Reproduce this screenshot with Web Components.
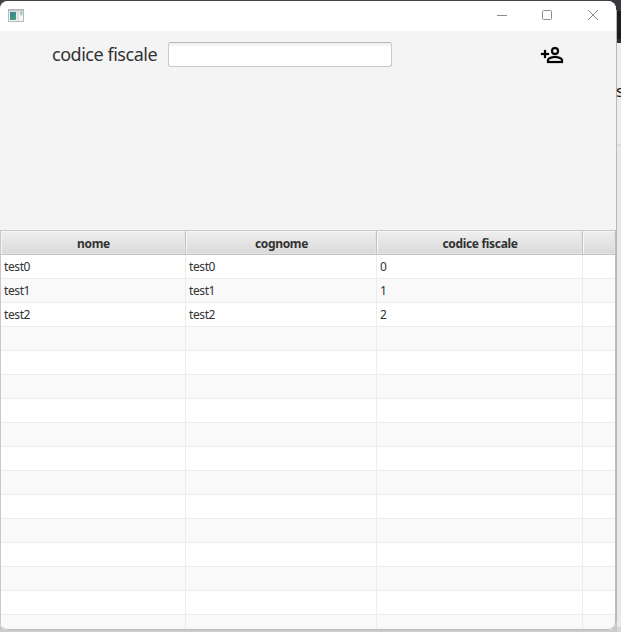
<!DOCTYPE html>
<html lang="it">
<head>
<meta charset="utf-8">
<title>codice fiscale</title>
<style>
html,body{margin:0;width:621px;height:632px;overflow:hidden}
body{font-family:"Noto Sans","Open Sans",sans-serif;color:#323232}
</style>
</head>
<body>
<desktop-backdrop>
  <app-window>
    <title-bar slot="title"></title-bar>
    <search-form label="codice fiscale"></search-form>
    <people-table></people-table>
  </app-window>
</desktop-backdrop>
<script>
class Base extends HTMLElement {
  constructor() {
    super();
    this.attachShadow({mode: 'open'}).innerHTML = this.render();
  }
}
customElements.define('desktop-backdrop', class extends Base {
  render() {
    return `<style>
:host{display:block;position:relative;width:621px;height:632px;overflow:hidden;
background:linear-gradient(#38393c 0 11px,#1c1d21 11px 39px,#303135 39px 43px,#ededed 43px 144px,#dedede 144px 146px,#e9e9e9 146px 627px,#d6d6d6 627px)}
.top{position:absolute;left:0;top:0;width:608px;height:10px;background:#464448}
.base{position:absolute;left:0;bottom:0;width:617px;height:12px;background:linear-gradient(#c9c9c9 0 10px,#cfcfcf)}
.edge{position:absolute;left:616px;top:10px;width:1px;height:612px;background:#b9b9b9}
.behind{position:absolute;left:616px;top:79px;font:17px/24px "Noto Sans",sans-serif;color:#222}
</style><div class="top"></div><div class="base"></div><div class="edge"></div><span class="behind">s</span><slot></slot>`;
  }
});
customElements.define('app-window', class extends Base {
  render() {
    return `<style>
:host{display:flex;flex-direction:column;position:relative;box-sizing:border-box;width:616px;height:629px;margin-top:1px;background:#f4f4f4;border-radius:8px;overflow:hidden}
:host::after{content:"";position:absolute;inset:229px 0 0;border:solid #bcbcbc;border-width:0 1px 1px 0;border-radius:0 0 8px 8px;pointer-events:none}
</style><slot name="title"></slot><slot></slot>`;
  }
});
customElements.define('title-bar', class extends Base {
  render() {
    return `<style>
:host{display:flex;align-items:center;height:30px;flex:none;background:#fff}
svg{display:block}
.app{margin:0 auto 2px 8px}
.ctl{width:46px;height:30px}
</style>
<svg class="app" width="16" height="13" viewBox="0 0 16 13">
<defs><linearGradient id="a" x2="1" y2="1"><stop stop-color="#377da5"/><stop offset="1" stop-color="#49a46c"/></linearGradient>
<linearGradient id="b" x2="0" y2="1"><stop stop-color="#7fb6d8"/><stop offset=".5" stop-color="#b9e3b5"/><stop offset=".8" stop-color="#fafafa"/></linearGradient></defs>
<rect x=".5" y=".5" width="15" height="12" fill="#f5f5f5" stroke="#b5b8ba"/><path d="M1 1h14v1.5H1z" fill="#c1c5ca"/>
<path d="M2 3h6v8H2z" fill="url(#a)"/><path d="M8.5 3h2.5v8H8.5z" fill="#dedede"/><path d="M12 3h2.5v6H12z" fill="url(#b)"/></svg>
<svg class="ctl" viewBox="0 0 46 30"><path d="M19 14.5h10" stroke="#8c8c8c" fill="none"/></svg>
<svg class="ctl" viewBox="0 0 46 30"><rect x="18.5" y="9.5" width="9" height="9" rx="1" stroke="#8c8c8c" fill="none"/></svg>
<svg class="ctl" viewBox="0 0 46 30"><path d="M18 9l10 10M28 9L18 19" stroke="#8c8c8c" fill="none"/></svg>`;
  }
});
customElements.define('search-form', class extends Base {
  render() {
    return `<style>
:host{display:flex;align-items:flex-start;flex:none;height:199px;box-sizing:border-box;padding:11px 52px 0}
label{width:116px;font:18px/25px "Noto Sans",sans-serif;letter-spacing:-.47px;white-space:nowrap}
input{box-sizing:border-box;width:224px;height:25px;margin:0;padding:0 8px;border:1px solid #c8c8c8;border-top-color:#b9b9b9;border-radius:3px;outline:0;background:linear-gradient(#efefef,#fff 5px)}
svg{display:block;margin:1px 0 0 auto}
</style><label for="cf">${this.getAttribute('label')}</label><input id="cf">
<svg width="24" height="24" viewBox="0 0 24 24"><path d="M15 4a4 4 0 0 0-4 4 4 4 0 0 0 4 4 4 4 0 0 0 4-4 4 4 0 0 0-4-4m0 1.9c1.16 0 2.1.94 2.1 2.1a2.1 2.1 0 0 1-2.1 2.1A2.1 2.1 0 0 1 12.9 8 2.1 2.1 0 0 1 15 5.9M4 7v3H1v2h3v3h2v-3h3v-2H6V7H4m11 6c-2.67 0-8 1.33-8 4v3h16v-3c0-2.67-5.33-4-8-4m0 1.9c2.97 0 6.1 1.46 6.1 2.1v1.1H8.9V17c0-.64 3.1-2.1 6.1-2.1z" stroke="#000" stroke-width=".25"/></svg>`;
  }
});
customElements.define('people-table', class extends Base {
  render() {
    const people = [['test0','test0','0'],['test1','test1','1'],['test2','test2','2']];
    const heads = ['nome','cognome','codice fiscale',''];
    const rows = Array.from({length: 16}, (_, i) => {
      const p = people[i] || [];
      return `<div class="row">${[0,1,2,3].map(c => `<span>${p[c] || ''}</span>`).join('')}</div>`;
    }).join('');
    return `<style>
:host{display:block;flex:1;min-height:0;overflow:hidden;box-sizing:border-box;border:1px solid #c8c8c8;border-right:0;border-bottom:0;background:#fff;font:12px/23px "Noto Sans",sans-serif}
.row,.head{display:grid;grid-template-columns:185px 191px 206px 1fr;box-sizing:border-box;height:24px}
.head{font-weight:700;text-align:center;letter-spacing:-.32px}
.head span{box-sizing:border-box;height:24px;line-height:25px;padding-left:1px;border-right:1px solid #c3c3c3;border-bottom:1px solid #c3c3c3;background:linear-gradient(#efefef,#d9d9d9);box-shadow:inset 1px 1px #f6f6f6,inset -1px -1px #e4e4e4}
.row span{box-sizing:border-box;padding-left:3px;line-height:24px;height:24px;border-right:1px solid #ededed;border-bottom:1px solid #ededed;letter-spacing:-.4px}
.row:nth-child(even) span{background:#f9f9f9}
.row span:last-child,.head span:last-child{border-right-color:#c3c3c3}
</style><div class="head">${heads.map(h => `<span>${h}</span>`).join('')}</div>${rows}`;
  }
});
</script>
</body>
</html>
